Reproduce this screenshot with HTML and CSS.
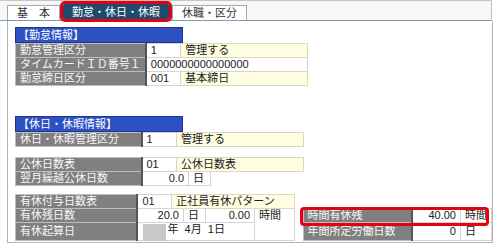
FILE: index.html
```html
<!DOCTYPE html>
<html lang="ja">
<head>
    <meta charset="UTF-8">
    <title>勤怠・休日・休暇</title>
    <link rel="stylesheet" href="styles.css">
</head>
<body>

    <div class="tab-bar">
        <div class="tab">基　本</div>
        <div class="tab active">勤怠・休日・休暇</div>
        <div class="tab">休職・区分</div>
    </div>

    <div class="panel">
        <!-- 勤怠情報 -->
        <div class="section-title">【勤怠情報】</div>
        <table class="grid">
            <colgroup><col class="c-lbl"><col class="c-code"><col class="c-name"></colgroup>
            <tr><td class="lbl">勤怠管理区分</td><td>1</td><td class="ro">管理する</td></tr>
            <tr><td class="lbl">タイムカードＩＤ番号１</td><td colspan="2">0000000000000000</td></tr>
            <tr><td class="lbl">勤怠締日区分</td><td>001</td><td class="ro">基本締日</td></tr>
        </table>

        <!-- 休日・休暇情報 -->
        <div class="section-title second">【休日・休暇情報】</div>
        <table class="grid">
            <colgroup><col class="c-lbl"><col class="c-code"><col class="c-name"></colgroup>
            <tr><td class="lbl">休日・休暇管理区分</td><td>1</td><td class="ro">管理する</td></tr>
        </table>

        <table class="grid block">
            <colgroup><col class="c-lbl"><col class="c-code"><col style="width:12px"><col style="width:22px"><col style="width:93px"></colgroup>
            <tr><td class="lbl">公休日数表</td><td>01</td><td class="ro" colspan="3">公休日数表</td></tr>
            <tr><td class="lbl">翌月繰越公休日数</td><td class="num" colspan="2">0.0</td><td>日</td><td class="blank"></td></tr>
        </table>

        <div class="paid">
            <table class="grid">
                <colgroup>
                    <col class="c-lbl"><col class="c-code"><col style="width:12px"><col style="width:22px"><col style="width:50px">
                    <col style="width:40px"><col style="width:3px"><col style="width:110px"><col style="width:50px"><col style="width:25px">
                </colgroup>
                <tr>
                    <td class="lbl">有休付与日数表</td><td>01</td><td class="ro" colspan="4">正社員有休パターン</td>
                    <td class="blank" colspan="4"></td>
                </tr>
                <tr>
                    <td class="lbl">有休残日数</td><td class="num" colspan="2">20.0</td><td>日</td><td class="num">0.00</td>
                    <td class="top" rowspan="2">時間</td><td class="blank"></td>
                    <td class="lbl">時間有休残</td><td class="num">40.00</td><td>時間</td>
                </tr>
                <tr>
                    <td class="lbl">有休起算日</td><td class="date" colspan="4"><span class="mask"></span>年&nbsp;&nbsp;4月&nbsp;&nbsp;1日</td>
                    <td class="blank"></td>
                    <td class="lbl">年間所定労働日数</td><td class="num">0</td><td>日</td>
                </tr>
            </table>
            <div class="mark"></div>
        </div>
    </div>

</body>
</html>
```

FILE: styles.css
```css
body {
    margin: 0;
    font-family: "Liberation Sans", "Noto Sans CJK JP", sans-serif;
    font-size: 11px;
    color: #222;
    background-color: #fff;
}
.tab-bar {
    display: flex;
    align-items: flex-end;
    gap: 3px;
    width: 492px;
    height: 21px;
    padding-left: 7px;
    box-sizing: border-box;
    background-color: #f7f7f7;
    border-top: 1px solid #c6c6c6;
    border-right: 1px solid #c0c0c0;
    border-bottom: 1px solid #7f9db9;
}
.tab {
    height: 14px;
    line-height: 14px;
    padding: 0 9px;
    background-color: #fff;
    border: 1px solid #a8a8a8;
    border-bottom: none;
    color: #333;
    white-space: nowrap;
}
.tab:first-child {
    width: 33px;
}
.tab.active {
    margin-bottom: 1px;
    padding: 0 8px;
    background-color: #1e4a6d;
    border-color: #1e4a6d;
    color: #fff;
    border-radius: 2px;
    outline: 3px solid #e60012;
    outline-offset: 0;
}
.panel {
    position: relative;
    margin-left: 7px;
    width: 486px;
    height: 222px;
    box-sizing: border-box;
    padding: 6px 0 0 7px;
    border: 1px solid #b4b4b4;
    border-top: none;
}
.section-title {
    width: 168px;
    height: 16px;
    box-sizing: border-box;
    padding-left: 2px;
    line-height: 14px;
    background-color: #2d50c3;
    border: 1px solid #1d3690;
    color: #fff;
}
.section-title.second {
    margin-top: 30px;
}
.grid {
    border-collapse: collapse;
    table-layout: fixed;
}
.grid td {
    height: 13px;
    padding: 0 4px;
    line-height: 13px;
    border: 1px solid #d4d4d4;
    background-color: #fff;
    white-space: nowrap;
    overflow: hidden;
}
.c-lbl { width: 126px; }
.c-code { width: 35px; }
.c-name { width: 127px; }
.grid td.lbl {
    padding-left: 4px;
    background-color: #808080;
    border-color: #bdbdbd;
    border-right: 2px solid #555;
    color: #f7f7f7;
    overflow: hidden;
}
.grid td.ro {
    background-color: #fffde2;
    border-color: #dcdab8;
}
.grid td.num {
    text-align: right;
}
.grid td.top {
    vertical-align: top;
}
.grid td.blank {
    border: none;
    background: transparent;
}
.grid td.date {
    overflow: visible;
    padding-left: 5px;
}
.mask {
    display: inline-block;
    width: 23px;
    height: 17px;
    margin-right: 1px;
    vertical-align: top;
    background-color: #c8c8c8;
    position: relative;
    top: 1px;
}
.block {
    margin-top: 10px;
}
.paid {
    position: relative;
    margin-top: 8px;
}
.mark {
    position: absolute;
    left: 285px;
    top: 13px;
    width: 189px;
    height: 19px;
    box-sizing: border-box;
    border: 3px solid #e60012;
    border-radius: 4px;
}
```
